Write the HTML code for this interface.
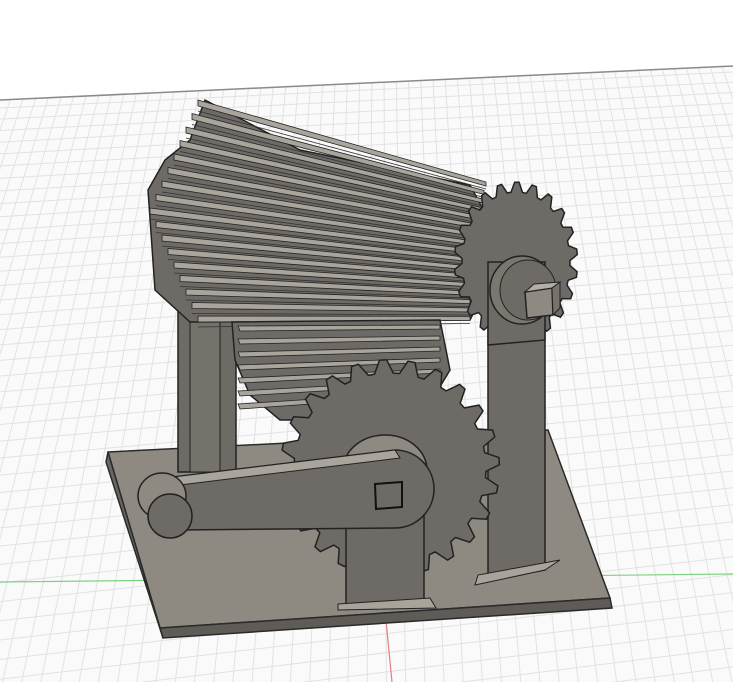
<!DOCTYPE html>
<html><head><meta charset="utf-8">
<style>
html,body{margin:0;padding:0;background:#fff;width:733px;height:682px;overflow:hidden}
svg{display:block;overflow:hidden}
</style></head>
<body>
<svg id="s" width="733" height="682" viewBox="0 0 733 682" xmlns="http://www.w3.org/2000/svg">
<defs>
<clipPath id="floor"><polygon points="0,100 733,66 733,682 0,682"/></clipPath>
</defs>
<rect width="733" height="682" fill="#ffffff"/>
<polygon points="0,100 733,66 733,682 0,682" fill="#fafafa"/>
<g id="grid" clip-path="url(#floor)" stroke="#e2e2e2" stroke-width="1"></g>
<line x1="0" y1="100" x2="733" y2="66" stroke="#8a8a8a" stroke-width="1.5"/>
<line x1="0" y1="582" x2="733" y2="574" stroke="#7fd27f" stroke-width="1.2"/>
<line x1="384" y1="600" x2="392" y2="682" stroke="#e08080" stroke-width="1.2"/>

<polygon points="108,452 548,430 610,598 160,628" fill="#8e8a82" stroke="#2a2a2a" stroke-width="1.5"/>
<polygon points="160,628 610,598 612,608 163,638" fill="#5f5c57" stroke="#2a2a2a" stroke-width="1.5"/>
<polygon points="108,452 160,628 163,638 106,462" fill="#6a6761" stroke="#2a2a2a" stroke-width="1.5"/>

<rect x="178" y="300" width="58" height="172" fill="#6e6b66" stroke="#222" stroke-width="1.5"/>
<rect x="190" y="300" width="30" height="172" fill="#75726c" stroke="#222" stroke-width="1"/>

<polygon points="488,262 545,262 545,570 488,580" fill="#6e6b66" stroke="#222" stroke-width="1.5"/>
<polygon points="475,585 545,570 560,560 478,575" fill="#a8a49b" stroke="#222" stroke-width="1"/>

<g id="helix"></g>
<g id="helix2"></g>

<path id="rg" fill="#6e6b66" stroke="#222" stroke-width="1.5"/>
<polygon points="488,262 545,262 545,340 488,345" fill="#6e6b66" stroke="#222" stroke-width="1.5"/>
<ellipse cx="522" cy="290" rx="32" ry="34" fill="#7a776f" stroke="#222" stroke-width="1.5"/>
<ellipse cx="528" cy="290" rx="28" ry="30" fill="#6e6b66" stroke="#222" stroke-width="1"/>
<polygon points="525,292 552,288 553,315 527,318" fill="#8e8a82" stroke="#222" stroke-width="1.5"/>
<polygon points="525,292 534,284 560,282 552,288" fill="#b3afa6" stroke="#222" stroke-width="1"/>
<polygon points="552,288 560,282 560,308 553,315" fill="#777369" stroke="#222" stroke-width="1"/>

<path id="lg" fill="#6e6b66" stroke="#222" stroke-width="1.5"/>

<rect x="346" y="500" width="78" height="104" fill="#6e6b66" stroke="#222" stroke-width="1.5"/>
<polygon points="338,604 430,598 436,608 338,610" fill="#a8a49b" stroke="#222" stroke-width="1"/>

<ellipse cx="385" cy="470" rx="42" ry="35" fill="#8e8a82" stroke="#222" stroke-width="1.5"/>
<path d="M165,478 L395,450 A38,38 0 0 1 395,528 L180,530 Z" fill="#6e6b66" stroke="#222" stroke-width="1.5"/>
<path d="M165,478 L395,450 L400,458 L172,486 Z" fill="#a9a59c" stroke="#222" stroke-width="1"/>
<ellipse cx="162" cy="496" rx="24" ry="23" fill="#8e8a82" stroke="#222" stroke-width="1.5"/>
<ellipse cx="170" cy="516" rx="22" ry="22" fill="#6e6b66" stroke="#222" stroke-width="1.5"/>
<polygon points="375,484 402,482 402,507 376,509" fill="none" stroke="#111" stroke-width="2"/>
</svg>
<script>
(function(){
var NS="http://www.w3.org/2000/svg";
function el(t,a,p){var e=document.createElementNS(NS,t);for(var k in a)e.setAttribute(k,a[k]);p.appendChild(e);return e;}
var g=document.getElementById('grid');
for(var i=0;i<60;i++){var yl=108+i*11+i*i*0.12, yr=72+i*10+i*i*0.11;if(yl>682&&yr>682)break;el('line',{x1:0,y1:yl,x2:733,y2:yr},g);}
for(var j=-40;j<100;j++){var xt=j*12, xb=(j*12-380)*1.6+380;el('line',{x1:xt,y1:60,x2:xb,y2:682},g);}
function gear(cx,cy,rx,ry,ro,n,ph){var d='';for(var k=0;k<n*4;k++){var a=ph+k/(n*4)*Math.PI*2;var r=(k%4==1||k%4==2)?ro:1;var x=cx+Math.cos(a)*rx*r,y=cy+Math.sin(a)*ry*r;d+=(k?'L':'M')+x.toFixed(1)+','+y.toFixed(1);}return d+'Z';}
document.getElementById('lg').setAttribute('d',gear(390,468,96,95,1.14,24,0.1));
document.getElementById('rg').setAttribute('d',gear(516,262,54,70,1.14,22,0.05));
var h=document.getElementById('helix');
el('polygon',{points:'205,100 300,150 470,185 505,250 470,320 190,322 155,290 148,190 165,160 190,140',fill:'#6e6b66',stroke:'#222','stroke-width':1.5},h);
for(var i=0;i<17;i++){
 var yl=100+i*13.5, yr=182+i*8.4;
 var xl=150+Math.abs(i-8)*6, xr=470+(i<8?(8-i)*2:0);
 el('polygon',{points:xl+','+yl+' '+xr+','+yr+' '+xr+','+(yr+4)+' '+xl+','+(yl+6),fill:'#a9a59c',stroke:'#222','stroke-width':0.8},h);
 el('line',{x1:xl,y1:yl+11,x2:xr,y2:yr+7,stroke:'#333','stroke-width':0.8},h);
}
var h2=document.getElementById('helix2');
el('polygon',{points:'232,322 440,320 450,370 420,420 280,420 250,395 235,360',fill:'#6e6b66',stroke:'#222','stroke-width':1.5},h2);
for(var i=0;i<7;i++){
 var yl=326+i*13, yr=325+i*11;
 el('polygon',{points:'238,'+yl+' 440,'+yr+' 440,'+(yr+4)+' 240,'+(yl+5),fill:'#a9a59c',stroke:'#222','stroke-width':0.8},h2);
}
})();
</script>
</body></html>
